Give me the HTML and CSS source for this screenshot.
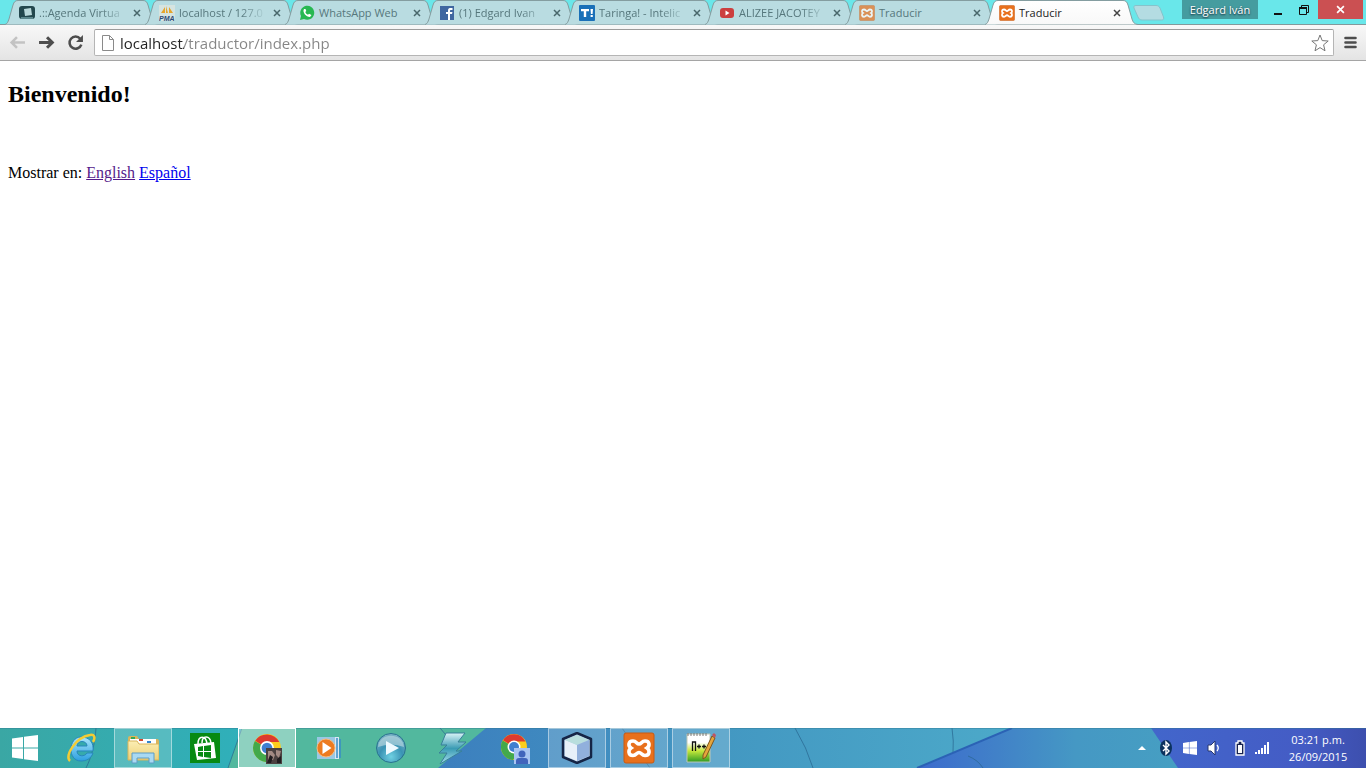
FILE: index.html
```html
<!DOCTYPE html>
<html lang="es">
  <head>
    <meta charset="UTF-8" />
    <meta name="viewport" content="width=device-width, initial-scale=1.0" />
    <title>Traducir</title>
    <link rel="stylesheet" href="styles.css">
  </head>
  <body>
    <!-- Formas compartidas -->
    <svg class="defs" aria-hidden="true">
      <defs>
        <linearGradient id="tabActive" x1="0" y1="0" x2="0" y2="1">
          <stop offset="0" stop-color="#ffffff" />
          <stop offset="1" stop-color="#f8f8f8" />
        </linearGradient>
        <linearGradient id="ieBlue" x1="0" y1="0" x2="0" y2="1">
          <stop offset="0" stop-color="#a9e6fb" />
          <stop offset="1" stop-color="#2c9fe0" />
        </linearGradient>
        <linearGradient id="folder" x1="0" y1="0" x2="0" y2="1">
          <stop offset="0" stop-color="#fbeeb4" />
          <stop offset="1" stop-color="#edd078" />
        </linearGradient>
        <radialGradient id="orb" cx="0.5" cy="0.8" r="0.8">
          <stop offset="0" stop-color="#6fd0e2" />
          <stop offset="0.5" stop-color="#3a93b4" />
          <stop offset="1" stop-color="#7fb3c6" />
        </radialGradient>
        <linearGradient id="bolt" x1="0" y1="0" x2="0" y2="1">
          <stop offset="0" stop-color="#d9f3f6" />
          <stop offset="0.5" stop-color="#3a9bb4" />
          <stop offset="1" stop-color="#a6e0ec" />
        </linearGradient>
        <linearGradient id="note" x1="0" y1="0" x2="0" y2="1">
          <stop offset="0.3" stop-color="#ffffff" />
          <stop offset="0.6" stop-color="#c6e83c" />
          <stop offset="1" stop-color="#2e9a22" />
        </linearGradient>
        <symbol id="xampp" viewBox="0 0 32 32">
          <rect x="1" y="1" width="30" height="30" rx="2" fill="#e8701c" stroke="#c95a12" />
          <path d="M10 9C5 9 5 14 8 16C5 18 5 23.500 10 23.500C13.500 23.500 13.500 20.500 16 20.500S18.500 23.500 22 23.500C27 23.500 27 18 24 16C27 14 27 9 22 9C18.500 9 18.500 12 16 12S13.500 9 10 9z" fill="none" stroke="#fff" stroke-width="3.600" />
          <path d="M12 16h8" stroke="#e8701c" stroke-width="3" />
        </symbol>
        <symbol id="chrome" viewBox="0 0 28 28">
          <circle cx="14" cy="14" r="13" fill="#fccd1d" />
          <path d="M14 14L2.700 7.500A13 13 0 0 0 13 27l7-10z" fill="#43a94b" />
          <path d="M14 14L3 7.200A13 13 0 0 1 25.500 8.500H14z" fill="#dc3a2f" />
          <circle cx="14" cy="14" r="6.500" fill="#fff" />
          <circle cx="14" cy="14" r="5" fill="#3f7fd0" />
        </symbol>
        <symbol id="windows" viewBox="0 0 26 26">
          <path d="M0 3.500L11 2v10.500H0zM12 1.800L26 0v12.500H12zM0 13.500h11V24L0 22.500zM12 13.500h14V26l-14-1.800z" fill="#fff" />
        </symbol>
        <symbol id="cross" viewBox="0 0 8 8">
          <path d="M1 1l6 6M7 1L1 7" fill="none" stroke="currentColor" stroke-width="1.500" />
        </symbol>
        <symbol id="tabShape" viewBox="0 0 154 25" preserveAspectRatio="none">
          <path d="M0 24.500C2 24 3 22 4 19L8 5C9 2 10 .5 13 .5H138C141 .5 142 2 143 5l4 14c1 3 2 5 6 5.500" />
        </symbol>
      </defs>
    </svg>

    <header class="browser">
      <div class="tab-strip">
        <nav class="tabs">
          <div class="tab">
            <svg class="tab-shape"><use href="#tabShape" /></svg>
            <button class="tab-link">
              <svg class="favicon" viewBox="0 0 16 16"><rect y="1" width="16" height="13" rx="3" fill="#23474d" /><path d="M5 4l7-1 1 7-7 1z" fill="#b9d8da" /><path d="M2 12h12v2H2z" fill="#5d888d" /></svg>
              <span class="tab-title long">.::Agenda Virtua</span>
            </button>
            <button class="tab-close" aria-label="Cerrar"><svg><use href="#cross" /></svg></button>
          </div>
          <div class="tab">
            <svg class="tab-shape"><use href="#tabShape" /></svg>
            <button class="tab-link">
              <svg class="favicon" viewBox="0 0 16 16"><rect width="16" height="16" fill="#d6e4e0" /><path d="M2 8l4-6v6zM7 8V1l2 7zM10 8V2l4 6z" fill="#e5a52b" /><text class="pma" x="0" y="16" fill="#2c4a78">PMA</text></svg>
              <span class="tab-title long">localhost / 127.0</span>
            </button>
            <button class="tab-close" aria-label="Cerrar"><svg><use href="#cross" /></svg></button>
          </div>
          <div class="tab">
            <svg class="tab-shape"><use href="#tabShape" /></svg>
            <button class="tab-link">
              <svg class="favicon" viewBox="0 0 16 16"><path d="M1 15l1-4a7 7 0 1 1 3 3z" fill="#27b852" /><path d="M5 4c-2 3 2 8 6 8l1.500-2-2.500-1.300-1 1C8 9.500 6.500 8 6.300 7l1-1-.8-2z" fill="#fff" /></svg>
              <span class="tab-title">WhatsApp Web</span>
            </button>
            <button class="tab-close" aria-label="Cerrar"><svg><use href="#cross" /></svg></button>
          </div>
          <div class="tab">
            <svg class="tab-shape"><use href="#tabShape" /></svg>
            <button class="tab-link">
              <svg class="favicon" viewBox="0 0 16 16"><rect x="1" y="1" width="14" height="14" fill="#3f66a0" /><path d="M9 15V9H7V7h2V5.500C9 3.500 10 3 12 3h1.500v2H12c-.8 0-1 .3-1 1v1h2.500L13 9h-2v6z" fill="#fff" /></svg>
              <span class="tab-title long">(1) Edgard Ivan</span>
            </button>
            <button class="tab-close" aria-label="Cerrar"><svg><use href="#cross" /></svg></button>
          </div>
          <div class="tab">
            <svg class="tab-shape"><use href="#tabShape" /></svg>
            <button class="tab-link">
              <svg class="favicon" viewBox="0 0 16 16"><rect width="16" height="16" rx="1" fill="#1a70b8" /><path d="M2 4h8v2.300H7.200V12H4.800V6.300H2zM11.500 4H14l-.4 5h-1.700zM11.600 10h2.200v2h-2.200z" fill="#fff" /></svg>
              <span class="tab-title long">Taringa! - Intelic</span>
            </button>
            <button class="tab-close" aria-label="Cerrar"><svg><use href="#cross" /></svg></button>
          </div>
          <div class="tab">
            <svg class="tab-shape"><use href="#tabShape" /></svg>
            <button class="tab-link">
              <svg class="favicon" viewBox="0 0 16 16"><rect x="1" y="3" width="14" height="10" rx="3" fill="#cc3f3f" /><path d="M6.500 5.500v5l4-2.500z" fill="#fff" /></svg>
              <span class="tab-title long">ALIZEE JACOTEY</span>
            </button>
            <button class="tab-close" aria-label="Cerrar"><svg><use href="#cross" /></svg></button>
          </div>
          <div class="tab">
            <svg class="tab-shape"><use href="#tabShape" /></svg>
            <button class="tab-link">
              <svg class="favicon faded"><use href="#xampp" /></svg>
              <span class="tab-title">Traducir</span>
            </button>
            <button class="tab-close" aria-label="Cerrar"><svg><use href="#cross" /></svg></button>
          </div>
          <div class="tab active">
            <svg class="tab-shape"><use href="#tabShape" /></svg>
            <button class="tab-link">
              <svg class="favicon"><use href="#xampp" /></svg>
              <span class="tab-title">Traducir</span>
            </button>
            <button class="tab-close" aria-label="Cerrar"><svg><use href="#cross" /></svg></button>
          </div>
          <button class="new-tab" aria-label="Nueva pestaña">
            <svg viewBox="0 0 32 16"><path d="M3 .5h20c2 0 3 .8 4 2.500l3.500 9c.5 2 0 3-2 3H9c-2 0-3-1-4-3L1 3C.5 1.500 1 .5 3 .5z" fill="#b4dce2" stroke="#86c3cb" /></svg>
          </button>
        </nav>
        <div class="window-controls">
          <button class="profile">Edgard Iván</button>
          <button class="window-button" aria-label="Minimizar">
            <svg viewBox="0 0 12 12"><path d="M2 9h8v2H2z" fill="#111" /></svg>
          </button>
          <button class="window-button" aria-label="Restaurar">
            <svg viewBox="0 0 12 12"><path d="M3.500 3V1.500h7v7H9" fill="none" stroke="#111" /><path d="M1.500 4h7v6.500h-7z" fill="none" stroke="#111" /><path d="M1 3h8v2H1z" fill="#111" /></svg>
          </button>
          <button class="window-close" aria-label="Cerrar ventana"><svg><use href="#cross" /></svg></button>
        </div>
      </div>

      <div class="toolbar">
        <button class="nav-button" aria-label="Atrás">
          <svg viewBox="0 0 16 16"><path d="M15 8H2M7.500 3l-5 5 5 5" fill="none" stroke="#c3c3c3" stroke-width="2.400" /></svg>
        </button>
        <button class="nav-button" aria-label="Adelante">
          <svg viewBox="0 0 16 16"><path d="M1 8h13M8.500 3l5 5-5 5" fill="none" stroke="#4d4d4d" stroke-width="2.800" /></svg>
        </button>
        <button class="nav-button" aria-label="Recargar">
          <svg viewBox="0 0 16 16"><path d="M12.500 4.500A5.700 5.700 0 1 0 13.500 10" fill="none" stroke="#4d4d4d" stroke-width="2.400" /><path d="M15 1v6.500H8.500z" fill="#4d4d4d" /></svg>
        </button>
        <div class="address">
          <svg class="page-icon" viewBox="0 0 12 16"><path d="M.5 .5h7l4 4v11H.5zM7.500 .5v4h4" fill="#fff" stroke="#8a8a8a" /></svg>
          <input class="url" type="text" value="localhost/traductor/index.php" aria-label="Dirección">
          <button class="star" aria-label="Marcador">
            <svg viewBox="0 0 18 18"><path d="M9 1l2.200 5.600 6 .4-4.600 3.800L14 16.800 9 13.600 4 16.800l1.400-6L.8 7l6-.4z" fill="#fff" stroke="#777" stroke-linejoin="round" /></svg>
          </button>
        </div>
        <button class="menu" aria-label="Menú">
          <svg viewBox="0 0 13 13"><path d="M1.500 2h10M1.500 6.500h10M1.500 11h10" stroke="#4d4d4d" stroke-width="2.600" stroke-linecap="round" /></svg>
        </button>
      </div>
    </header>

    <main class="content">
      <h2>Bienvenido!</h2>
      <br><br>
      Mostrar en: <a class="seen" href="index.php?lang=en">English</a> <a href="index.php?lang=es">Español</a>
    </main>

    <footer class="taskbar">
      <svg class="wallpaper" viewBox="0 0 1366 40" preserveAspectRatio="none" aria-hidden="true">
        <defs>
          <linearGradient id="teal"><stop offset="0" stop-color="#3aa7a4" /><stop offset="1" stop-color="#2fb0bb" /></linearGradient>
          <linearGradient id="sky"><stop offset="0" stop-color="#3c7fbe" /><stop offset="0.5" stop-color="#4398c2" /><stop offset="1" stop-color="#4ca9c9" /></linearGradient>
          <linearGradient id="low"><stop offset="0" stop-color="#3c6bcd" /><stop offset="0.3" stop-color="#4181c8" /><stop offset="0.6" stop-color="#4598c4" /><stop offset="1" stop-color="#469fc2" /></linearGradient>
          <linearGradient id="navy"><stop offset="0" stop-color="#4266cb" /><stop offset="0.7" stop-color="#445cc5" /><stop offset="1" stop-color="#3d4fae" /></linearGradient>
        </defs>
        <path d="M0 0h250l-20 40H0z" fill="url(#teal)" />
        <path d="M242 0h248l-50 40H228z" fill="#52b89e" />
        <path d="M486 0h526l-95 40H438z" fill="url(#sky)" />
        <path d="M1012 0h145l24 40H917z" fill="url(#low)" />
        <path d="M1151 0h215v40h-188z" fill="url(#navy)" />
        <path d="M96 0c-1 15-4 28-10 40M242 0l-14 40M440 0l12 14M795 0q12 20 18 40M952 0q2 14 1 24M968 28q10 4 15 12M622 0l28 40" fill="none" stroke="#28658f" stroke-opacity="0.7" />
        <path d="M1012 0l-95 40" stroke="#2b62b5" stroke-width="2" />
        <path d="M0 .5h1366" stroke="#2f7890" stroke-opacity="0.4" />
      </svg>

      <button class="start" aria-label="Inicio"><svg><use href="#windows" /></svg></button>
      <div class="apps">
        <button class="app" aria-label="Internet Explorer">
          <svg viewBox="0 0 32 32"><path d="M28 19H12c0 6 8 6 10 2h6c-2 6-7 8-12 8C2 29 3 5 16 5c9 0 13 6 12 14zM12 14h10c0-6-10-6-10 0z" fill="url(#ieBlue)" stroke="#2787bb" /><path d="M5 29C-1 24 11 5 25 3c4-1 6 2 3 7" fill="none" stroke="#f3cc35" stroke-width="2.500" /></svg>
        </button>
        <button class="app open" aria-label="Explorador">
          <svg viewBox="0 0 32 32"><path d="M1 6q0-2 2-2h7l2 3h18q2 0 2 2v18H1z" fill="#d9b55b" /><path d="M3 7h26v5H3z" fill="#fff" /><path d="M4 5h4v2H4z" fill="#31a955" /><path d="M12 7h4v2h-4z" fill="#d34a2e" /><path d="M20 9h4v2h-4z" fill="#3285d0" /><path d="M1 9h9l2 3h20v16H1z" fill="url(#folder)" stroke="#d9b55b" /><path d="M5 31V21h22v10h-5v-5H10v5z" fill="#a9d9f2" stroke="#5c9dc5" /></svg>
        </button>
        <button class="app" aria-label="Tienda">
          <svg viewBox="0 0 32 32"><path d="M1 1h30v30H1z" fill="#078a12" /><path d="M5 12l20-2 2 16-19 2z" fill="#fff" /><path d="M9 12c0-9 8-9 9 0M13 11c0-8 8-8 9 0" fill="none" stroke="#fff" stroke-width="1.500" /><path d="M9 15l5-1v5H9zM15 14l7-1v6h-7zM9 20h5v5l-5-1zM15 20h7v6l-7-1z" fill="#078a12" /></svg>
        </button>
        <button class="app open current" aria-label="Chrome">
          <svg viewBox="0 0 32 32"><use href="#chrome" x="1" y="1" width="30" height="30" /><path d="M15 16h16v16H15z" fill="#4b4140" /><path d="M17 19h4l3 4-2 5h-5zM25 18l5 1-2 7-3-3z" fill="#a38a83" /><path d="M19 23l3 2-2 6h-4zM26 27l4-3v7h-4z" fill="#211d20" /></svg>
        </button>
        <button class="app" aria-label="Reproductor de Windows">
          <svg viewBox="0 0 32 32"><path d="M8 5h18v22H8z" fill="#d9e8f3" /><path d="M24 6v20M27 7v19" stroke="#398cc6" stroke-width="1.500" /><path d="M4 5h18v22H4z" fill="#99c8e4" /><circle cx="13" cy="16" r="9" fill="#ed7b20" stroke="#f5bb80" /><path d="M9.500 10v12l9-6z" fill="#fff" /></svg>
        </button>
        <button class="app" aria-label="Reproductor">
          <svg viewBox="0 0 32 32"><circle cx="16" cy="16" r="14.500" fill="url(#orb)" stroke="#28728e" /><path d="M3 15C4 0 28 0 29 15q-13-5-26 0z" fill="#c2dce3" fill-opacity="0.6" /><path d="M11 9v14l13-7z" fill="#eefaff" /></svg>
        </button>
        <button class="app" aria-label="Winamp">
          <svg viewBox="0 0 32 32"><path d="M9 1h19l-7 9h8L19 19h6L3 32l7-11H2l8-8H4z" fill="url(#bolt)" stroke="#397f99" /></svg>
        </button>
        <button class="app" aria-label="Chrome, perfil">
          <svg viewBox="0 0 32 32"><use href="#chrome" x="1" y="1" width="28" height="28" /><path d="M15 16h16v16H15z" fill="#a8c4f2" /><circle cx="23" cy="22" r="3.500" fill="#4164bc" /><path d="M17 32v-3q0-3 3-3h6q3 0 3 3v3z" fill="#4164bc" /></svg>
        </button>
        <button class="app open" aria-label="NetBeans">
          <svg viewBox="0 0 32 32"><path d="M16 1l14 6v18l-14 6-14-6V7z" fill="#b7cfe8" stroke="#152546" stroke-width="2.500" stroke-linejoin="round" /><path d="M4 8l12 5v16L4 24z" fill="#e7f0f9" /><path d="M16 3l12 5-12 5L4 8z" fill="#b8dedd" /><path d="M28 8l-12 5v16l12-5z" fill="#91b0dc" /></svg>
        </button>
        <button class="app open" aria-label="XAMPP"><svg><use href="#xampp" /></svg></button>
        <button class="app open" aria-label="Notepad++">
          <svg viewBox="0 0 32 32"><path d="M2 2h23v28H2z" fill="url(#note)" stroke="#bfc8b5" /><path d="M3 1v3M6 1v3M9 1v3M12 1v3M15 1v3M18 1v3M21 1v3" stroke="#777" /><path d="M7.500 19v-9h3v9M12 14.500h4M14 12.500v4M17 14.500h4M19 12.500v4" fill="none" stroke="#111" stroke-width="1.300" /><path d="M27 4l3 2-9 19-3 2v-4z" fill="#e5a53c" stroke="#80551e" /><path d="M27 3l2-2 2 2-1 3z" fill="#c15361" /></svg>
        </button>
      </div>
      <div class="tray">
        <svg class="arrow" viewBox="0 0 8 4"><path d="M4 0l4 4H0z" fill="#fff" /></svg>
        <svg viewBox="0 0 16 16"><ellipse cx="8" cy="8" rx="6" ry="8" fill="#0b325e" /><path d="M5 5l6 6-3 3V2l3 3-6 6" fill="none" stroke="#fff" stroke-width="1.400" /></svg>
        <svg viewBox="0 0 16 16"><use href="#windows" x="1" y="1" width="14" height="14" /></svg>
        <svg viewBox="0 0 16 16"><path d="M2 5h3l4-4v14l-4-4H2z" fill="#fff" stroke="#26366f" /><path d="M11 5q2.500 3 0 6" fill="none" stroke="#fff" stroke-width="1.300" /></svg>
        <svg class="battery" viewBox="0 0 16 16"><path d="M6 1h4v2h2v12H4V3h2z" fill="#172350" stroke="#fff" stroke-width="1.300" /><path d="M6 5h4v8H6z" fill="#fff" /></svg>
        <svg viewBox="0 0 16 16"><path d="M1 12h2v2H1zM4 10h2v4H4zM7 8h2v6H7zM10 5h2v9h-2zM13 2h2v12h-2z" fill="#fff" /></svg>
      </div>
      <div class="clock">
        <time>03:21 p.m.</time>
        <time>26/09/2015</time>
      </div>
    </footer>
  </body>
</html>
```
FILE: styles.css
```css
* {
  box-sizing: border-box;
}

body {
  display: flex;
  flex-direction: column;
  min-height: 100vh;
  margin: 0;
  background-color: #fff;
  font-family: "Liberation Serif", serif;
  font-size: 16px;
}

button {
  padding: 0;
  border: none;
  background: none;
  color: inherit;
  font: inherit;
}

svg {
  display: block;
}

.defs {
  position: absolute;
  width: 0;
  height: 0;
}

/* Navegador */
.browser {
  font-family: "Open Sans", "Noto Sans", sans-serif;
  font-size: 11px;
}

.tab-strip {
  display: flex;
  justify-content: space-between;
  height: 25px;
  background-color: #69e7ea;
}

.tabs {
  display: flex;
  flex: 1;
  min-width: 0;
  padding-left: 5px;
  box-shadow: inset 0 -1px #83999b;
}

.tab {
  position: relative;
  display: flex;
  flex: 0 1 154px;
  align-items: center;
  min-width: 0;
  margin-right: -14px;
  padding: 0 16px 0 14px;
  color: #56777c;
}

.tab-shape {
  position: absolute;
  top: 0;
  left: 0;
  width: 100%;
  height: 25px;
  fill: #b9dce1;
  stroke: #849da0;
}

.tab.active {
  z-index: 1;
  color: #222;
}

.tab.active .tab-shape {
  fill: url(#tabActive);
}

.tab-link {
  position: relative;
  display: flex;
  flex: 1;
  align-items: center;
  gap: 4px;
  min-width: 0;
  text-align: left;
}

.favicon {
  flex: none;
  width: 16px;
  height: 16px;
}

.faded {
  opacity: 0.7;
}

.pma {
  font-family: "Liberation Sans", sans-serif;
  font-size: 7px;
  font-style: italic;
  font-weight: bold;
}

.tab-title {
  flex: 1;
  line-height: 16px;
  white-space: nowrap;
}

.tab-title.long {
  mask-image: linear-gradient(to right, #000 70%, transparent);
}

.tab-close {
  position: relative;
  flex: none;
  margin-left: 4px;
  padding: 2px;
  color: #48676b;
}

.active .tab-close {
  color: #444;
}

.tab-close svg {
  width: 8px;
  height: 8px;
}

.new-tab {
  flex: none;
  align-self: center;
  margin-left: 8px;
}

.new-tab svg {
  width: 32px;
  height: 16px;
}

.window-controls {
  display: flex;
  align-items: flex-start;
  padding-right: 3px;
  box-shadow: inset 0 -1px #83999b;
}

.profile {
  width: 76px;
  height: 19px;
  margin-right: 7px;
  background-color: #459c9f;
  color: #fff;
  line-height: 19px;
  text-shadow: 0 1px 2px #123;
}

.window-button {
  display: flex;
  align-items: center;
  justify-content: center;
  width: 26px;
  height: 19px;
}

.window-button svg {
  width: 12px;
  height: 12px;
}

.window-close {
  display: flex;
  align-items: center;
  justify-content: center;
  width: 45px;
  height: 19px;
  margin-left: 1px;
  background-color: #cb5052;
  color: #fff;
}

.window-close svg {
  width: 9px;
  height: 9px;
}

.toolbar {
  display: flex;
  align-items: center;
  height: 36px;
  padding: 0 9px 0 8px;
  border-bottom: 1px solid #a5a5a5;
  background: linear-gradient(#f8f8f8, #e4e4e4);
}

.nav-button {
  margin-right: 10px;
  padding: 1px;
}

.nav-button svg {
  width: 17px;
  height: 17px;
}

.address {
  display: flex;
  flex: 1;
  align-items: center;
  height: 27px;
  margin-left: -1px;
  padding: 0 4px 0 7px;
  border: 1px solid #b5b5b5;
  border-top-color: #9b9b9b;
  border-radius: 2px;
  background-color: #fff;
}

.page-icon {
  width: 12px;
  height: 16px;
  margin-right: 6px;
}

/* El dominio va más oscuro que la ruta */
.url {
  flex: 1;
  min-width: 0;
  height: 24px;
  padding: 0;
  border: none;
  outline: none;
  background: linear-gradient(to right, #222 64px, #858585 64px);
  background-clip: text;
  -webkit-background-clip: text;
  color: transparent;
  font-family: "Open Sans", "Noto Sans", sans-serif;
  font-size: 15px;
}

.star svg {
  width: 18px;
  height: 18px;
}

.menu {
  margin-left: 10px;
}

.menu svg {
  width: 13px;
  height: 13px;
}

/* Página */
.content {
  flex: 1;
  padding: 0 8px;
  line-height: 18px;
}

.content h2 {
  margin: 20px 0;
  font-size: 24px;
  line-height: 27px;
}

.content a {
  color: #0000ee;
}

.content a.seen {
  color: #551a8b;
}

/* Barra de tareas */
.taskbar {
  position: relative;
  display: flex;
  align-items: center;
  height: 40px;
  color: #fff;
  font-family: "Open Sans", "Noto Sans", sans-serif;
  font-size: 11px;
}

.wallpaper {
  position: absolute;
  top: 0;
  left: 0;
  width: 100%;
  height: 100%;
}

.start,
.apps,
.tray,
.clock {
  position: relative;
}

.start {
  display: flex;
  justify-content: center;
  width: 50px;
}

.start svg {
  width: 26px;
  height: 26px;
}

.apps {
  display: flex;
  flex: 1;
}

.app {
  display: flex;
  align-items: center;
  justify-content: center;
  width: 58px;
  height: 40px;
  margin: 0 2px;
}

.app svg {
  width: 32px;
  height: 32px;
}

.app.open {
  border: 1px solid rgba(255, 255, 255, 0.45);
  background-color: rgba(255, 255, 255, 0.18);
}

.app.current {
  border-color: #fff;
  background-color: rgba(255, 255, 255, 0.35);
}

.tray {
  display: flex;
  align-items: center;
  gap: 8px;
}

.tray svg {
  width: 16px;
  height: 16px;
}

.tray .arrow {
  width: 8px;
  height: 4px;
  margin-right: 4px;
}

.tray .battery {
  margin-right: -2px;
  margin-left: 2px;
}

.clock {
  display: flex;
  flex-direction: column;
  width: 96px;
  line-height: 17px;
  text-align: center;
}
```
